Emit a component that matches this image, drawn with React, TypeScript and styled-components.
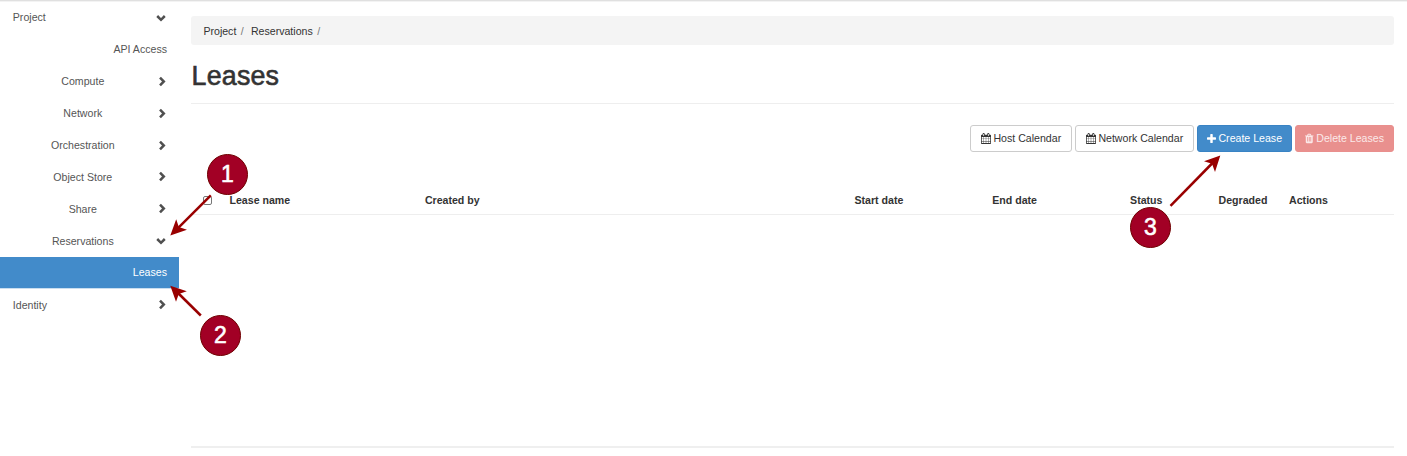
import React from "react";
import styled, { createGlobalStyle } from "styled-components";

const GlobalStyle = createGlobalStyle`
  * { box-sizing: border-box; }
  body {
    margin: 0;
    background: #fff;
    color: #333;
    font-family: "Liberation Sans", Arial, sans-serif;
    font-size: 10.6px;
    line-height: 15px;
    overflow: hidden;
  }
`;

const Page = styled.div`
  position: relative;
  display: flex;
  height: 456px;
  border-top: 1px solid #e0e0e0;
  box-shadow: inset 0 1px 0 #f3f3f3;
`;

const Sidebar = styled.nav`
  width: 179px;
  flex: none;
  padding-top: 0.8px;
`;

const NavRow = styled.div<{ $level: "top" | "group" | "leaf"; $active?: boolean }>`
  display: flex;
  align-items: center;
  height: 31.95px;
  padding: 0 12px 0 12.8px;
  color: ${(p) => (p.$active ? "#fff" : "#555")};
  background: ${(p) => (p.$active ? "#428bca" : "transparent")};
  border-bottom: ${(p) => (p.$active ? "1px solid #c9def0" : "none")};
  justify-content: ${(p) => (p.$level === "leaf" ? "flex-end" : "space-between")};
`;

const NavLabel = styled.span<{ $centered?: boolean }>`
  width: ${(p) => (p.$centered ? "140px" : "auto")};
  text-align: ${(p) => (p.$centered ? "center" : "left")};
`;

const ChevronIcon = styled.svg<{ $open?: boolean }>`
  width: 10px;
  height: 10px;
  flex: none;
  margin-right: ${(p) => (p.$open ? "1px" : "0.5px")};
  fill: none;
  stroke: #505050;
  stroke-width: 2.5;
  transform: ${(p) => (p.$open ? "rotate(90deg)" : "translateY(-0.5px)")};
`;

const Main = styled.main`
  flex: 1;
  display: flex;
  flex-direction: column;
  padding: 15px 13px 8px 12px;
`;

const Breadcrumb = styled.div`
  display: flex;
  height: 29px;
  align-items: center;
  padding: 1px 12.4px 0;
  border-radius: 3px;
  background: #f4f4f4;
`;

const Separator = styled.span`
  color: #777;
  padding: 0 7.2px 0 4.4px;
`;

const Title = styled.h1`
  margin: 0;
  height: 59px;
  padding: 15px 0 0 0.6px;
  border-bottom: 1px solid #eee;
  font-size: 26.8px;
  line-height: 32px;
  letter-spacing: 0.2px;
  font-weight: 400;
  -webkit-text-stroke: 0.6px #333;
`;

const Toolbar = styled.div`
  display: flex;
  justify-content: flex-end;
  gap: 3.4px;
  padding-top: 21px;
`;

const variants = {
  plain: { bg: "#fff", border: "#ccc", color: "#333" },
  primary: { bg: "#428bca", border: "#3983c4", color: "#fff" },
  danger: { bg: "#e9908e", border: "#e98f8d", color: "#fbe9e9" },
};

const Button = styled.button<{ $variant: keyof typeof variants; $width: number }>`
  display: flex;
  align-items: center;
  justify-content: center;
  gap: 2.5px;
  width: ${(p) => p.$width}px;
  height: 27px;
  padding: 0;
  font: inherit;
  white-space: nowrap;
  border-radius: 3px;
  border: 1px solid ${(p) => variants[p.$variant].border};
  background: ${(p) => variants[p.$variant].bg};
  color: ${(p) => variants[p.$variant].color};
`;

const ButtonIcon = styled.svg<{ $width: number }>`
  width: ${(p) => p.$width}px;
  height: 11px;
  flex: none;
  fill: currentColor;
`;

const TableHead = styled.div`
  display: grid;
  grid-template-columns: 38.5px 195.4px 429.6px 137.8px 137.8px 88.5px 70.5px 1fr;
  align-items: center;
  height: 28px;
  margin-top: 35px;
  border-bottom: 1px solid #eee;
  font-weight: 700;
`;

const Checkbox = styled.span`
  display: block;
  width: 9px;
  height: 9px;
  margin-left: 12px;
  border: 1px solid #777;
  border-radius: 2px;
`;

const Footer = styled.footer`
  margin-top: auto;
  border-top: 2px solid #efefef;
`;

const Arrows = styled.svg`
  position: absolute;
  left: 0;
  top: -1px;
  width: 1407px;
  height: 456px;
  pointer-events: none;
  stroke: #990000;
  fill: #990000;
`;

const Marker = styled.div<{ $x: number; $y: number }>`
  position: absolute;
  left: ${(p) => p.$x - 20.5}px;
  top: ${(p) => p.$y - 21.5}px;
  width: 41px;
  height: 41px;
  display: flex;
  align-items: center;
  justify-content: center;
  padding-bottom: 2px;
  border: 1px solid #6f0000;
  border-radius: 50%;
  background: #a20025;
  color: #fff;
  font-size: 23px;
  line-height: 26px;
  -webkit-text-stroke: 0.6px #fff;
`;

const CALENDAR =
  "M192 1664h288v-288h-288v288zm352 0h320v-288h-320v288zm-352-352h288v-320h-288v320zm352 0h320v-320h-320v320zm-352-384h288v-288h-288v288zm736 736h320v-288h-320v288zm-384-736h320v-288h-320v288zm768 736h288v-288h-288v288zm-384-352h320v-320h-320v320zm-352-864v-288q0-13-9.500-22.500t-22.500-9.500h-64q-13 0-22.500 9.500t-9.500 22.500v288q0 13 9.500 22.500t22.500 9.500h64q13 0 22.500-9.500t9.500-22.500zm736 864h288v-320h-288v320zm-384-384h320v-288h-320v288zm384 0h288v-288h-288v288zm32-480v-288q0-13-9.500-22.500t-22.500-9.500h-64q-13 0-22.500 9.500t-9.500 22.500v288q0 13 9.500 22.500t22.500 9.500h64q13 0 22.500-9.500t9.500-22.500zm384-64v1280q0 52-38 90t-90 38h-1408q-52 0-90-38t-38-90v-1280q0-52 38-90t90-38h128v-96q0-66 47-113t113-47h64q66 0 113 47t47 113v96h384v-96q0-66 47-113t113-47h64q66 0 113 47t47 113v96h128q52 0 90 38t38 90z";
const PLUS =
  "M1600 736v192q0 40-28 68t-68 28h-416v416q0 40-28 68t-68 28h-192q-40 0-68-28t-28-68v-416h-416q-40 0-68-28t-28-68v-192q0-40 28-68t68-28h416v-416q0-40 28-68t68-28h192q40 0 68 28t28 68v416h416q40 0 68 28t28 68z";
const TRASH =
  "M704 1376v-704q0-14-9-23t-23-9h-64q-14 0-23 9t-9 23v704q0 14 9 23t23 9h64q14 0 23-9t9-23zm256 0v-704q0-14-9-23t-23-9h-64q-14 0-23 9t-9 23v704q0 14 9 23t23 9h64q14 0 23-9t9-23zm256 0v-704q0-14-9-23t-23-9h-64q-14 0-23 9t-9 23v704q0 14 9 23t23 9h64q14 0 23-9t9-23zm-544-992h448l-48-117q-7-9-17-11h-317q-10 2-17 11zm928 32v64q0 14-9 23t-23 9h-96v948q0 83-47 143.500t-113 60.500h-832q-66 0-113-58.500t-47-141.500v-952h-96q-14 0-23-9t-9-23v-64q0-14 9-23t23-9h309l70-167q15-37 54-63t79-26h320q40 0 79 26t54 63l70 167h309q14 0 23 9t9 23z";

const Chevron = ({ open }: { open?: boolean }) => (
  <ChevronIcon viewBox="0 0 10 10" $open={open}>
    <path d="M3 1.2 L6.800 5 L3 8.800" />
  </ChevronIcon>
);

const groups = ["Compute", "Network", "Orchestration", "Object Store", "Share", "Reservations"];
const columns = ["Lease name", "Created by", "Start date", "End date", "Status", "Degraded", "Actions"];

export default function App() {
  return (
    <>
      <GlobalStyle />
      <Page>
        <Sidebar>
          <NavRow $level="top">
            <NavLabel>Project</NavLabel>
            <Chevron open />
          </NavRow>
          <NavRow $level="leaf">
            <NavLabel>API Access</NavLabel>
          </NavRow>
          {groups.map((name) => (
            <NavRow key={name} $level="group">
              <NavLabel $centered>{name}</NavLabel>
              <Chevron open={name === "Reservations"} />
            </NavRow>
          ))}
          <NavRow $level="leaf" $active>
            <NavLabel>Leases</NavLabel>
          </NavRow>
          <NavRow $level="top">
            <NavLabel>Identity</NavLabel>
            <Chevron />
          </NavRow>
        </Sidebar>
        <Main>
          <Breadcrumb>
            <span>Project</span>
            <Separator>/</Separator>
            <span>Reservations</span>
            <Separator>/</Separator>
          </Breadcrumb>
          <Title>Leases</Title>
          <Toolbar>
            <Button $variant="plain" $width={101.6}>
              <ButtonIcon $width={10} viewBox="64 0 1664 1792"><path d={CALENDAR} /></ButtonIcon>
              Host Calendar
            </Button>
            <Button $variant="plain" $width={118.600}>
              <ButtonIcon $width={10} viewBox="64 0 1664 1792"><path d={CALENDAR} /></ButtonIcon>
              Network Calendar
            </Button>
            <Button $variant="primary" $width={94.600}>
              <ButtonIcon $width={9} viewBox="192 0 1408 1664"><path d={PLUS} /></ButtonIcon>
              Create Lease
            </Button>
            <Button $variant="danger" $width={98.800}>
              <ButtonIcon $width={8.500} viewBox="192 0 1408 1792"><path d={TRASH} /></ButtonIcon>
              Delete Leases
            </Button>
          </Toolbar>
          <TableHead>
            <Checkbox />
            {columns.map((c) => (
              <span key={c}>{c}</span>
            ))}
          </TableHead>
          <Footer />
        </Main>
        <Marker $x={227.5} $y={174.5}>1</Marker>
        <Marker $x={220.5} $y={335.5}>2</Marker>
        <Marker $x={1150.5} $y={227.8}>3</Marker>
        <Arrows viewBox="0 0 1407 456">
          <g strokeWidth="2.5">
            <path d="M210.800 195.300 L178 228.200" />
            <path d="M200.800 315.500 L178 293" />
            <path d="M1170.500 205.800 L1213 162.500" />
          </g>
          <g stroke="none">
            <path d="M170.300 235.500 L176.200 219.300 L178.800 227 L187 229.700 Z" />
            <path d="M170.300 285.700 L186.800 291.200 L178.800 294 L176 301.800 Z" />
            <path d="M1220.300 155.500 L1215 172 L1212 163.800 L1204 161.300 Z" />
          </g>
        </Arrows>
      </Page>
    </>
  );
}
